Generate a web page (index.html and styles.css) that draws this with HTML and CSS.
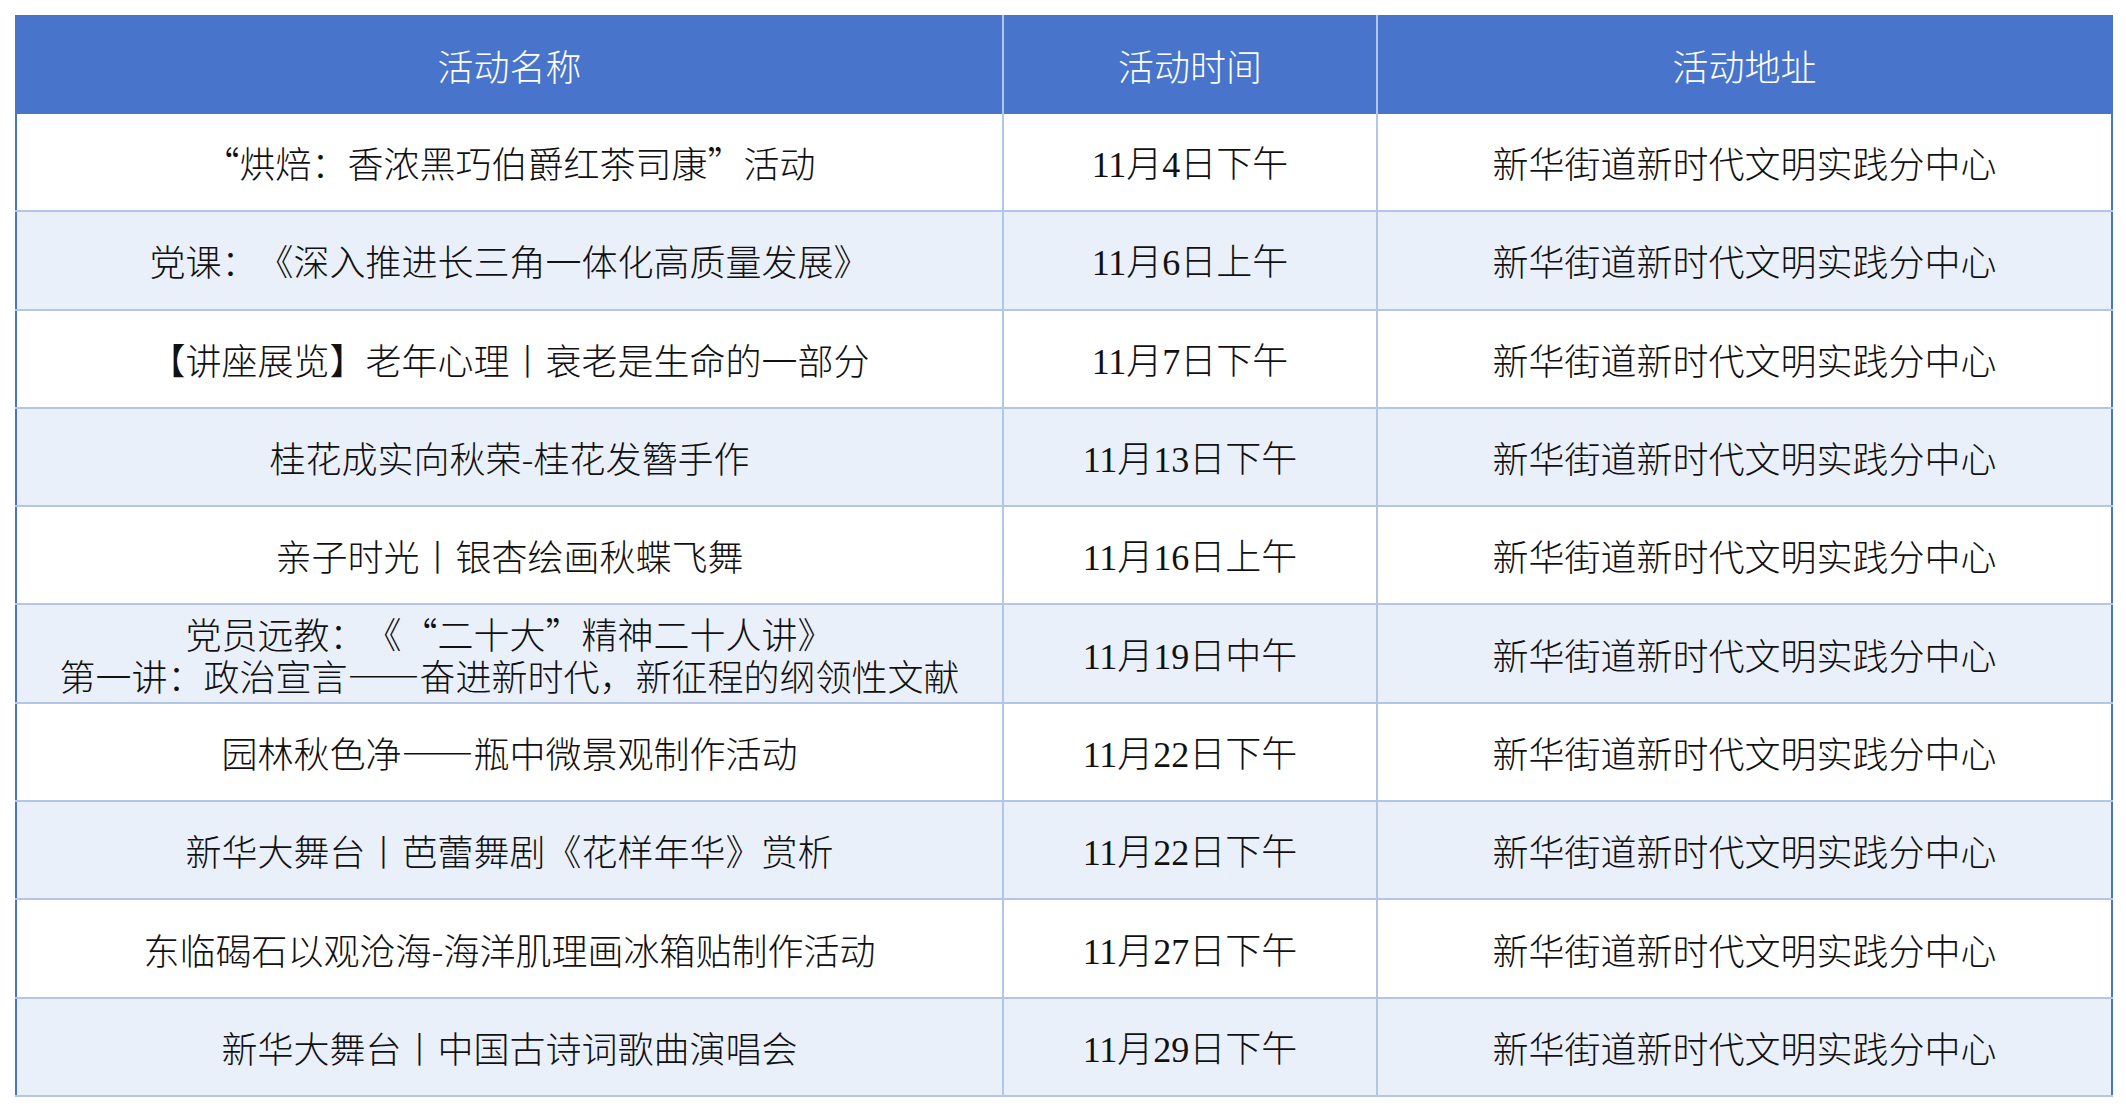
FILE: index.html
```html
<!DOCTYPE html>
<html lang="zh-CN">
<head>
<meta charset="utf-8">
<title>活动列表</title>
<link rel="stylesheet" href="styles.css">
</head>
<body>
<div class="page">
<table class="events">
  <colgroup>
    <col class="c-name">
    <col class="c-time">
    <col class="c-addr">
  </colgroup>
  <thead>
    <tr><th>活动名称</th><th>活动时间</th><th>活动地址</th></tr>
  </thead>
  <tbody>
    <tr><td>“烘焙：香浓黑巧伯爵红茶司康”活动</td><td class="time">11月4日下午</td><td>新华街道新时代文明实践分中心</td></tr>
    <tr><td>党课：《深入推进长三角一体化高质量发展》</td><td class="time">11月6日上午</td><td>新华街道新时代文明实践分中心</td></tr>
    <tr><td>【讲座展览】老年心理丨衰老是生命的一部分</td><td class="time">11月7日下午</td><td>新华街道新时代文明实践分中心</td></tr>
    <tr><td>桂花成实向秋荣-桂花发簪手作</td><td class="time">11月13日下午</td><td>新华街道新时代文明实践分中心</td></tr>
    <tr><td>亲子时光丨银杏绘画秋蝶飞舞</td><td class="time">11月16日上午</td><td>新华街道新时代文明实践分中心</td></tr>
    <tr><td class="two">党员远教：《“二十大”精神二十人讲》<br>第一讲：政治宣言——奋进新时代，新征程的纲领性文献</td><td class="time">11月19日中午</td><td>新华街道新时代文明实践分中心</td></tr>
    <tr><td>园林秋色净——瓶中微景观制作活动</td><td class="time">11月22日下午</td><td>新华街道新时代文明实践分中心</td></tr>
    <tr><td>新华大舞台丨芭蕾舞剧《花样年华》赏析</td><td class="time">11月22日下午</td><td>新华街道新时代文明实践分中心</td></tr>
    <tr><td>东临碣石以观沧海-海洋肌理画冰箱贴制作活动</td><td class="time">11月27日下午</td><td>新华街道新时代文明实践分中心</td></tr>
    <tr><td>新华大舞台丨中国古诗词歌曲演唱会</td><td class="time">11月29日下午</td><td>新华街道新时代文明实践分中心</td></tr>
  </tbody>
</table>
</div>
</body>
</html>
```

FILE: styles.css
```css
html, body {
  margin: 0;
  padding: 0;
  background: #ffffff;
}
.page {
  padding: 15px 15px 0 15px;
}
.events {
  width: 2096px;
  border-collapse: collapse;
  table-layout: fixed;
  font-family: "Noto Sans CJK SC", "Noto Sans", sans-serif;
  font-weight: 300;
  font-size: 36px;
  color: #111111;
  text-spacing-trim: space-all;
  border-left: 2px solid #4874cb;
  border-right: 2px solid #4874cb;
}
.c-name { width: 987px; }
.c-time { width: 374px; }
.c-addr { width: 735px; }
.events th {
  background: #4874cb;
  color: #ffffff;
  font-weight: 300;
  height: 99px;
  padding: 0;
  border-left: 2px solid #b4c6e8;
  text-align: center;
  vertical-align: middle;
}
.events th:first-child { border-left: none; }
.events td {
  height: 96.3px;
  padding: 0;
  text-align: center;
  vertical-align: middle;
  border-left: 2px solid #b4c6e8;
  border-bottom: 2px solid #b4c6e8;
  line-height: 42px;
}
.events td:first-child { border-left: none; }
.events tbody tr:nth-child(even) td { background: #eaf0fa; }
.events td.time {
  font-family: "Liberation Serif", "Noto Sans CJK SC", serif;
}
.time-text {
  display: inline-block;
}
.events td.time {
  padding-top: 6px;
  height: 90.3px;
}
.events td.two { line-height: 42px; }
```
